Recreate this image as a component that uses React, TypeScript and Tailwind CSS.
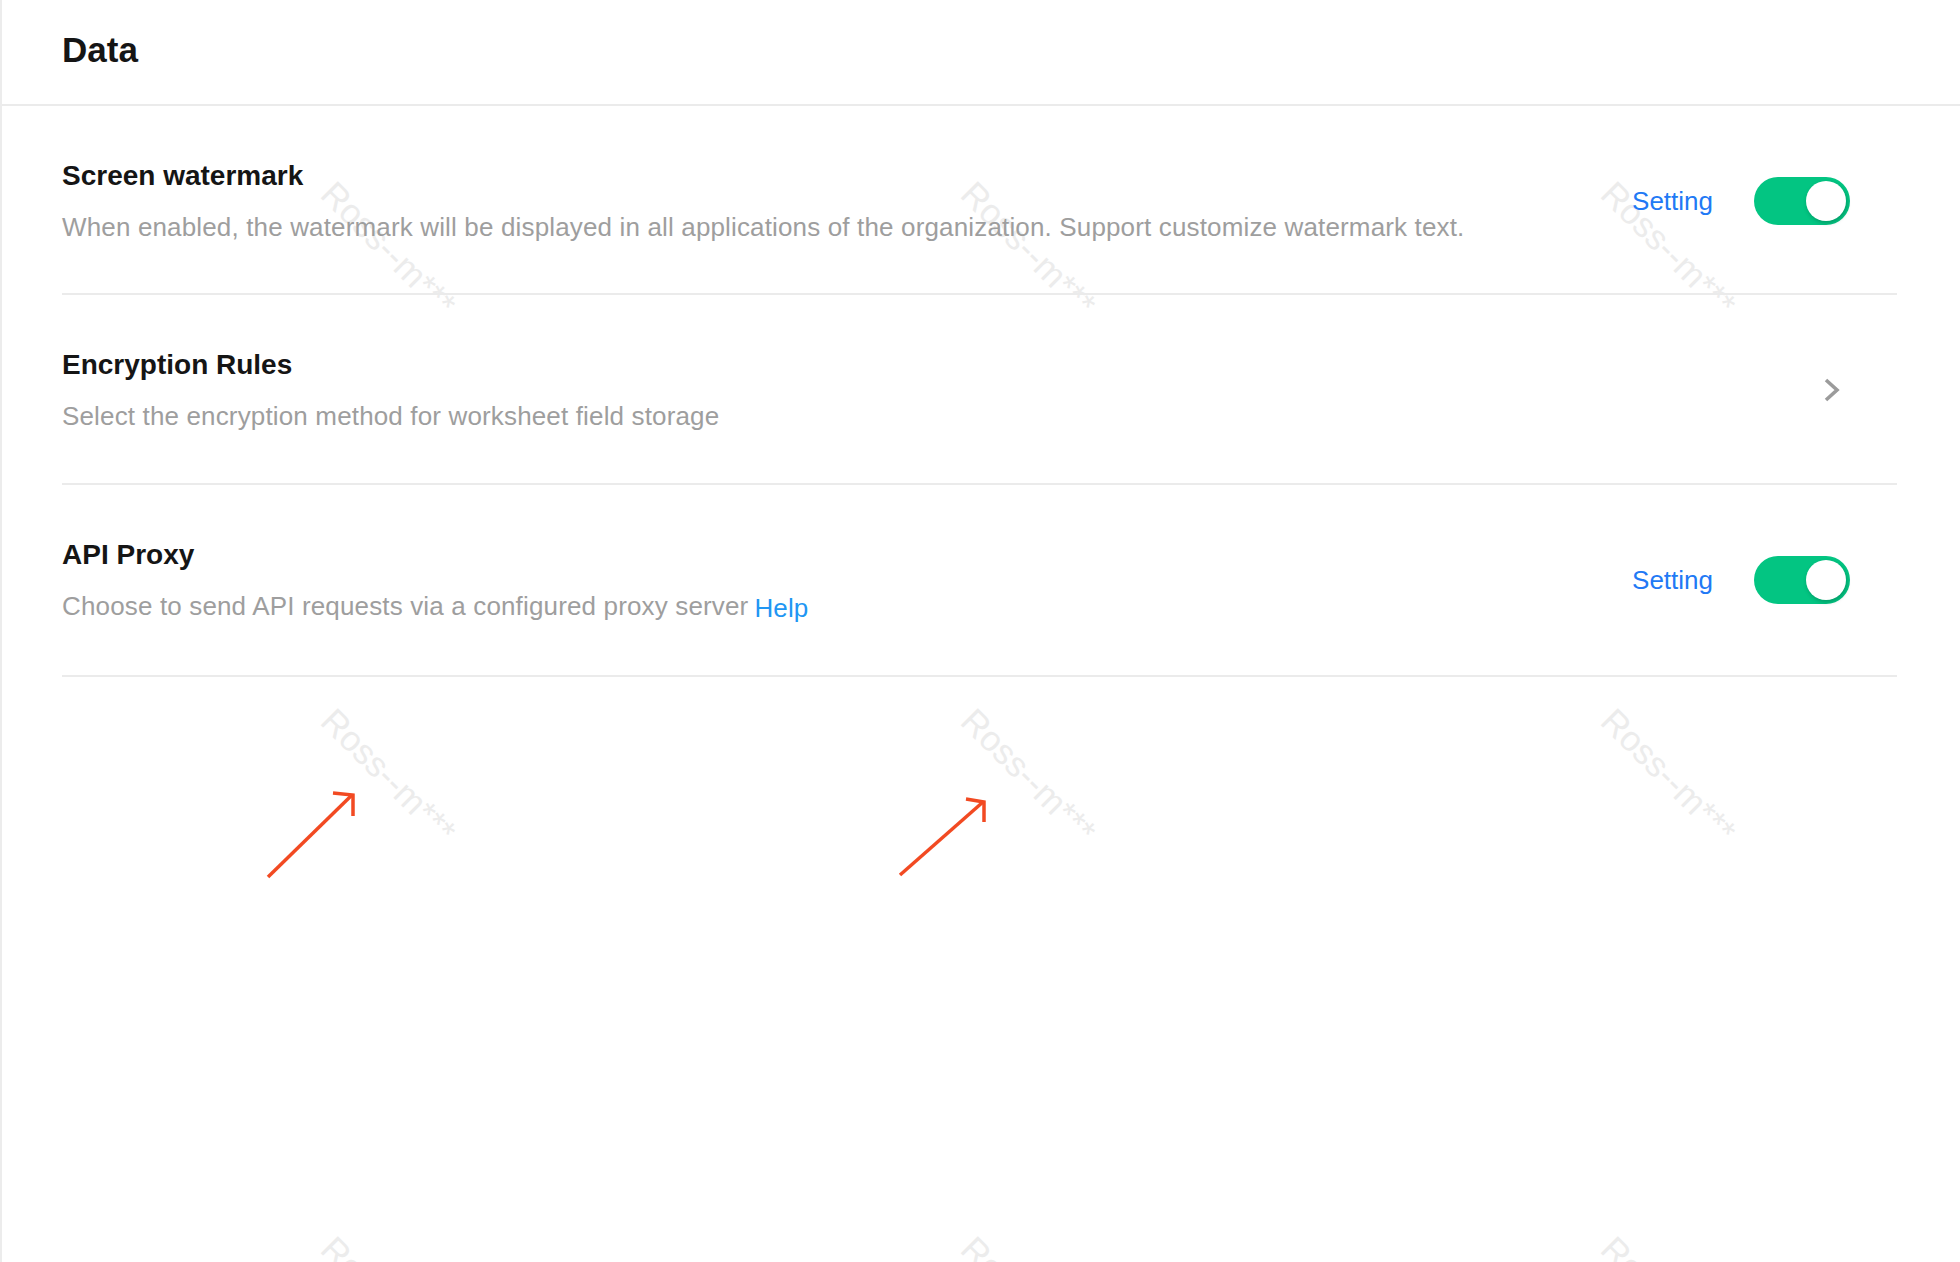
import React from "react";

const FONT = { fontFamily: '"Liberation Sans", Arial, Helvetica, sans-serif' };

function Toggle() {
  return (
    <div className="relative w-[96px] h-[48px] rounded-full bg-[#03c582] shrink-0">
      <div className="absolute right-[4px] top-[4px] w-[40px] h-[40px] rounded-full bg-white shadow-[1px_2px_4px_rgba(0,0,0,0.22)]" />
    </div>
  );
}

function Chevron() {
  return (
    <svg width="18" height="24" viewBox="0 0 18 24" className="shrink-0">
      <polyline points="3,2 14,12 3,22" fill="none" stroke="#9b9b9b" strokeWidth="3.6" strokeLinejoin="miter" />
    </svg>
  );
}

type RowProps = {
  title: string;
  desc: React.ReactNode;
  right: React.ReactNode;
  pb: string;
};

function Row({ title, desc, right, pb }: RowProps) {
  return (
    <div className={`flex items-center justify-between border-b-2 border-[#ebebeb] pt-[50px] ${pb}`}>
      <div className="flex flex-col">
        <div className="text-[28px] leading-[40px] font-bold text-[#151515]">{title}</div>
        <div className="mt-[13px] text-[26px] leading-[36px] tracking-[0.15px] text-[#9e9e9e]">{desc}</div>
      </div>
      {right}
    </div>
  );
}

function SettingToggle() {
  return (
    <div className="flex items-center gap-[41px] mr-[47px]">
      <span className="text-[26px] leading-[36px] text-[#2179f5]">Setting</span>
      <Toggle />
    </div>
  );
}

const marks = [
  [338, 175], [978, 175], [1618, 175],
  [338, 702], [978, 702], [1618, 702],
  [338, 1230], [978, 1230], [1618, 1230],
];

export default function App() {
  return (
    <div className="relative min-h-screen w-full bg-white border-l-2 border-[#ececec] overflow-hidden" style={FONT}>
      {/* watermark layer */}
      <div className="absolute inset-0 pointer-events-none">
        {marks.map(([x, y], i) => (
          <span
            key={i}
            className="absolute origin-top-left rotate-45 whitespace-nowrap text-[35px] leading-[35px] text-[#ececec]"
            style={{ left: x, top: y }}
          >
            Ross--m***
          </span>
        ))}
      </div>

      <div className="relative">
        <div className="h-[106px] border-b-2 border-[#ebebeb] pl-[60px] pt-[30px]">
          <div className="text-[35px] leading-[40px] font-bold text-[#151515]">Data</div>
        </div>

        <div className="pl-[60px] pr-[63px]">
          <Row
            title="Screen watermark"
            desc="When enabled, the watermark will be displayed in all applications of the organization. Support customize watermark text."
            right={<SettingToggle />}
            pb="pb-[48px]"
          />
          <Row
            title="Encryption Rules"
            desc="Select the encryption method for worksheet field storage"
            right={
              <div className="mr-[56px] flex items-center">
                <Chevron />
              </div>
            }
            pb="pb-[49px]"
          />
          <Row
            title="API Proxy"
            desc={
              <>
                Choose to send API requests via a configured proxy server
                <span className="relative top-[2px] ml-[6px] text-[#2196f3]">Help</span>
              </>
            }
            right={<SettingToggle />}
            pb="pb-[51px]"
          />
        </div>
      </div>

      {/* annotation arrows */}
      <svg className="absolute left-0 top-0 pointer-events-none" width="1960" height="1262">
        <g stroke="#f24a22" strokeWidth="3.5" fill="none" strokeLinecap="butt">
          <line x1="266" y1="877" x2="350" y2="795" />
          <polyline points="331,793 351,795 351,816" />
          <line x1="898" y1="875" x2="981" y2="802" />
          <polyline points="964,799 982,802 982,822" />
        </g>
      </svg>
    </div>
  );
}
